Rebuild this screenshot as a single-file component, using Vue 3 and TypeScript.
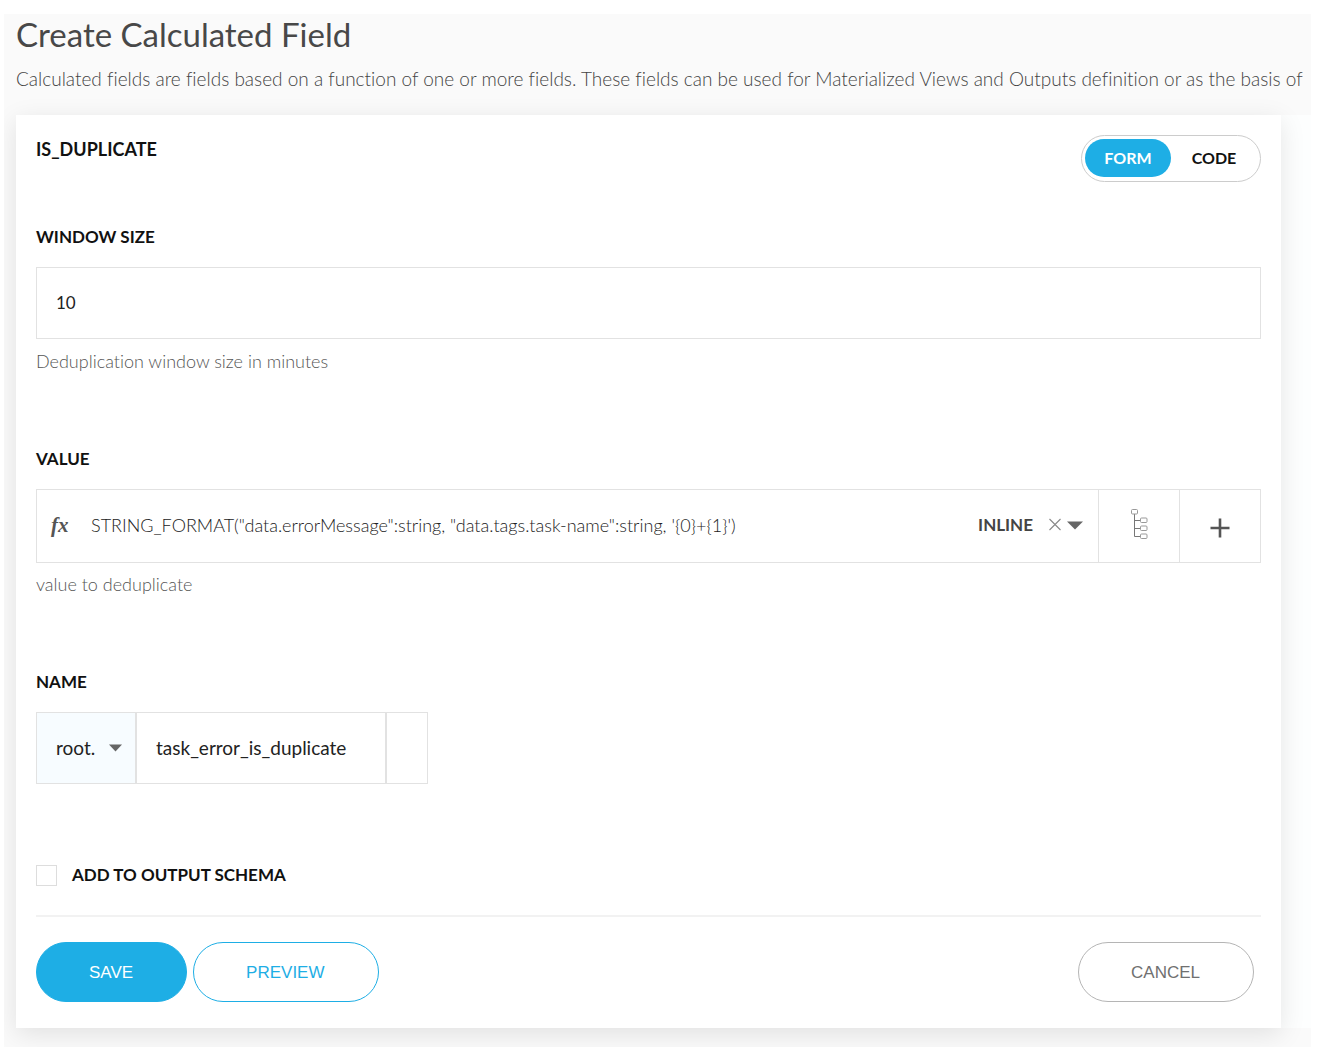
<script setup lang="ts">
import { ref } from 'vue'

type Mode = 'form' | 'code'

const modes: { id: Mode; label: string }[] = [
  { id: 'form', label: 'FORM' },
  { id: 'code', label: 'CODE' },
]
const mode = ref<Mode>('form')
const windowSize = ref('10')
const expression = ref('STRING_FORMAT("data.errorMessage":string, "data.tags.task-name":string, \'{0}+{1}\')')
const prefix = ref('root.')
const fieldName = ref('task_error_is_duplicate')
const addToSchema = ref(false)
</script>

<template>
  <main class="page">
    <h1 class="title">Create Calculated Field</h1>
    <p class="intro">
      Calculated fields are fields based on a function of one or more fields. These fields can be used for Materialized Views and Outputs definition or as the basis of
    </p>

    <div class="strip">
      <form class="card" @submit.prevent>
        <header class="card-head">
          <h2 class="label">IS_DUPLICATE</h2>
          <div class="toggle" role="group" aria-label="Editor mode">
            <button
              v-for="m in modes"
              :key="m.id"
              type="button"
              class="toggle-item"
              :class="{ active: mode === m.id }"
              :aria-pressed="mode === m.id"
              @click="mode = m.id"
            >{{ m.label }}</button>
          </div>
        </header>

        <section class="field">
          <label class="label" for="window-size">WINDOW SIZE</label>
          <input id="window-size" v-model="windowSize" class="box text-input" type="text" />
          <p class="hint">Deduplication window size in minutes</p>
        </section>

        <section class="field">
          <label class="label" for="value">VALUE</label>
          <div class="box value-box">
            <div class="value-main">
              <span class="fx" aria-hidden="true">fx</span>
              <input id="value" v-model="expression" class="value-input" type="text" />
              <span class="inline-tag">INLINE</span>
              <button type="button" class="icon-button" aria-label="Clear">
                <svg width="14" height="14" viewBox="0 0 14 14"><path d="M1.5 1 12.5 12M12.5 1 1.5 12" fill="none" stroke="#888" stroke-width="1.1" /></svg>
              </button>
              <button type="button" class="icon-button caret" aria-label="Open list">
                <svg width="16" height="9" viewBox="0 0 16 9"><path d="M0 .5H16L8 8.5Z" fill="#666" /></svg>
              </button>
            </div>
            <button type="button" class="side-button" aria-label="Pick a field">
              <svg class="tree" width="20" height="32" viewBox="0 0 20 32" fill="none" stroke="#999" stroke-width="1">
                <path d="M5.5 6V28.5M5.5 12.5H11M5.5 20.5H11M5.5 28.5H11" stroke="#777" />
                <rect x="2.5" y="1.5" width="6" height="4.500" rx="1" />
                <rect x="11.500" y="10" width="6.500" height="4.500" rx="1" />
                <rect x="11.500" y="18" width="6.500" height="4.500" rx="1" />
                <rect x="11.500" y="26" width="6.500" height="4.500" rx="1" />
              </svg>
            </button>
            <button type="button" class="side-button" aria-label="Add">
              <svg class="plus" width="20" height="20" viewBox="0 0 20 20"><path d="M10 .5V19.500M.5 10H19.500" stroke="#555" stroke-width="2.600" /></svg>
            </button>
          </div>
          <p class="hint">value to deduplicate</p>
        </section>

        <section class="field name-field">
          <label class="label" for="name">NAME</label>
          <div class="name-row">
            <div class="prefix">
              <select v-model="prefix" class="prefix-select" aria-label="Parent">
                <option>root.</option>
              </select>
              <svg class="prefix-caret" width="13" height="8" viewBox="0 0 13 8"><path d="M0 .5H13L6.500 7.500Z" fill="#666" /></svg>
            </div>
            <input id="name" v-model="fieldName" class="name-input" type="text" />
            <span class="name-end"></span>
          </div>
        </section>

        <div class="check-row">
          <input id="schema" v-model="addToSchema" class="check" type="checkbox" />
          <label class="label" for="schema">ADD TO OUTPUT SCHEMA</label>
        </div>

        <footer class="actions">
          <button type="submit" class="pill save">SAVE</button>
          <button type="button" class="pill preview">PREVIEW</button>
          <button type="button" class="pill cancel">CANCEL</button>
        </footer>
      </form>
    </div>
  </main>
</template>

<style>
body {
  background: #fff;
}
</style>

<style scoped>
.page,
.page * {
  box-sizing: border-box;
}

.page {
  margin: 14px 7px 7px 4px;
  padding: 0 0 19px 12px;
  overflow: hidden;
  background: #fafafa;
  font-family: Lato, "Open Sans", sans-serif;
  font-size: 17px;
  line-height: 24px;
  font-variant-ligatures: none;
  color: #222;
}

button,
input,
select {
  margin: 0;
  padding: 0;
  border: 0;
  border-radius: 0;
  background: none;
  font: inherit;
  color: inherit;
}

h1,
h2,
p {
  margin: 0;
}

.title {
  font-size: 33px;
  line-height: 40px;
  font-weight: 400;
  color: #484848;
}

.intro {
  margin: 13px 0 24px;
  white-space: nowrap;
  font-size: 19px;
  font-weight: 300;
  color: #444;
}

.strip {
  padding-right: 30px;
  background: #fdfefe;
}

.card {
  padding: 20px 20px 26px;
  background: #fff;
  box-shadow: 0 6px 24px rgba(0, 0, 0, 0.1);
}

.card-head {
  display: flex;
  justify-content: space-between;
  align-items: flex-start;
  margin-bottom: 43px;
}

.label {
  display: block;
  font-size: 17px;
  line-height: 24px;
  font-weight: 700;
  color: #111;
}

.card-head .label {
  padding-top: 2px;
  font-size: 18px;
}

.toggle {
  display: flex;
  height: 47px;
  padding: 3px;
  border: 1px solid #ccc;
  border-radius: 24px;
}

.toggle-item {
  width: 86px;
  height: 38px;
  border-radius: 19px;
  font-size: 16px;
  font-weight: 700;
  color: #111;
}

.toggle-item.active {
  background: #1eaee5;
  color: #fff;
}

.field {
  margin-bottom: 74px;
}

.box {
  width: 100%;
  height: 72px;
  margin: 18px 0 10px;
  border: 1px solid #e2e2e2;
}

.text-input {
  display: block;
  padding: 0 19px 2px;
}

.hint {
  font-size: 18px;
  font-weight: 300;
  color: #555;
}

.value-box {
  display: flex;
  height: 74px;
  margin-bottom: 9px;
}

.value-main {
  flex: 1;
  display: flex;
  align-items: center;
  padding: 0 15px 2px 14px;
}

.fx {
  width: 40px;
  font: italic 700 21px/24px "Liberation Serif", serif;
  color: #555;
}

.value-input {
  flex: 1;
  min-width: 0;
  font-size: 18px;
  font-weight: 300;
  color: #222;
}

.inline-tag {
  margin-right: 15px;
  font-weight: 700;
  color: #444;
}

.icon-button {
  display: flex;
}

.caret {
  margin-left: 5px;
}

.side-button {
  display: flex;
  justify-content: center;
  align-items: center;
  width: 81px;
  border-left: 1px solid #e2e2e2;
}

.tree {
  margin-bottom: 4px;
}

.plus {
  margin-top: 4px;
}

.name-field {
  margin-bottom: 79px;
}

.name-row {
  display: flex;
  width: 392px;
  height: 72px;
  margin-top: 18px;
  border: 1px solid #e2e2e2;
  font-size: 19px;
}

.prefix {
  position: relative;
  width: 100px;
  background: #f7fcff;
  border-right: 2px solid #e2e2e2;
}

.prefix-select {
  width: 100%;
  height: 100%;
  padding: 0 0 0 19px;
  appearance: none;
}

.prefix-caret {
  position: absolute;
  top: 31px;
  right: 13px;
  pointer-events: none;
}

.name-input {
  flex: 1;
  min-width: 0;
  padding: 0 0 0 19px;
}

.name-end {
  width: 42px;
  border-left: 2px solid #e2e2e2;
}

.check-row {
  display: flex;
  align-items: center;
  gap: 15px;
  padding-bottom: 28px;
  border-bottom: 2px solid #f2f2f2;
}

.check {
  width: 21px;
  height: 21px;
  border: 1px solid #ddd;
  background: #fff;
  appearance: none;
}

.check:checked {
  background: #1eaee5;
}

.actions {
  display: flex;
  gap: 6px;
  padding: 25px 7px 0 0;
}

.pill {
  height: 60px;
  padding: 2px 53px 0 52px;
  border: 1px solid #1eaee5;
  border-radius: 30px;
  font-family: "Liberation Sans", Arial, sans-serif;
  font-size: 17px;
}

.save {
  background: #1eaee5;
  color: #fff;
}

.preview {
  color: #1eaee5;
}

.cancel {
  margin-left: auto;
  border-color: #b5b5b5;
  color: #707070;
}
</style>
